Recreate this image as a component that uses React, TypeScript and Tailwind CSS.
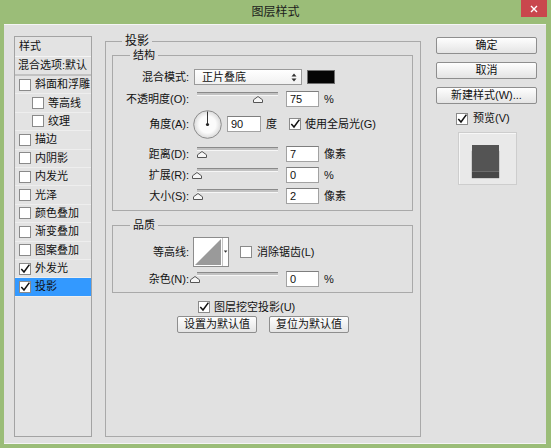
import React from 'react';

type Effect = { name: string; on?: boolean; indent?: boolean; active?: boolean };

const effects: Effect[] = [
  { name: '斜面和浮雕' },
  { name: '等高线', indent: true },
  { name: '纹理', indent: true },
  { name: '描边' },
  { name: '内阴影' },
  { name: '内发光' },
  { name: '光泽' },
  { name: '颜色叠加' },
  { name: '渐变叠加' },
  { name: '图案叠加' },
  { name: '外发光', on: true },
  { name: '投影', on: true, active: true },
];

function Check({ on }: { on?: boolean }) {
  return (
    <span className="flex h-[12px] w-[12px] shrink-0 items-center justify-center border border-[#8a8a8a] bg-white">
      {on && (
        <svg viewBox="0 0 10 10" className="h-[10px] w-[10px] overflow-visible">
          <path d="M1.3 5 L4 8 L9.4 0.6" fill="none" stroke="#111" strokeWidth="1.5" />
        </svg>
      )}
    </span>
  );
}

function Label({ children }: { children: React.ReactNode }) {
  return <span className="w-[76px] shrink-0 whitespace-nowrap text-right">{children}</span>;
}

function Field({ v, w = 'w-[33px]' }: { v: string; w?: string }) {
  return (
    <div className={`ml-[5px] flex h-[16px] shrink-0 items-center border border-[#a2a2a2] border-t-[#7e7e7e] bg-white pl-[3px] ${w}`}>
      {v}
    </div>
  );
}

function Slider({ thumb }: { thumb: number }) {
  return (
    <div className="relative ml-[4px] h-[16px] w-[88px] shrink-0">
      <div className="absolute left-[4px] right-[3px] top-[1px] h-[4px] border-t border-b border-[#8a8a8a] border-b-[#f6f6f6] bg-[#c2c2c2]" />
      <svg className="absolute top-[5px]" style={{ left: thumb - 5 }} width="10" height="7" viewBox="0 0 10 7">
        <path d="M5 0.5 L9.5 3.8 V6.5 H0.5 V3.8 Z" fill="#f6f6f6" stroke="#555" />
      </svg>
    </div>
  );
}

function Btn({ children, className = '' }: { children: React.ReactNode; className?: string }) {
  return (
    <div
      className={`flex h-[17px] shrink-0 items-center justify-center rounded-[2px] border border-[#8e8e8e] bg-linear-to-b from-[#fefefe] to-[#e4e4e4] ${className}`}
    >
      {children}
    </div>
  );
}

export default function App() {
  return (
    <div className="flex h-[448px] w-[551px] flex-col bg-[#9bbd78] font-['Liberation_Sans','Noto_Sans_CJK_SC',sans-serif] text-[11px] leading-none text-[#111]">
      {/* title bar */}
      <div className="relative flex h-[24px] shrink-0 items-center justify-center">
        <span className="text-[12px] text-[#1c1c1c]">图层样式</span>
        <div className="absolute right-[4px] top-0 flex h-[17px] w-[26px] items-center justify-center bg-[#c9474d]">
          <svg width="8" height="8" viewBox="0 0 8 8">
            <path d="M1 1 L7 7 M7 1 L1 7" stroke="#fff" strokeWidth="1.4" />
          </svg>
        </div>
      </div>

      {/* dialog body */}
      <div className="ml-[4px] flex h-[420px] w-[542px] shrink-0 items-start border-t border-b border-[#f5f5f5] bg-[#e1e1e1] pl-[10px] pt-[10px]">
        {/* styles list */}
        <div className="mt-[1px] flex h-[401px] w-[78px] shrink-0 flex-col border border-[#a3a3a3] bg-[#e3e3e3]">
          <div className="flex h-[20px] shrink-0 items-center border-b border-[#f4f4f4] pl-[4px]">样式</div>
          <div className="flex h-[19px] shrink-0 items-center whitespace-nowrap border-b-2 border-[#c2c2c2] pl-[3px]">
            混合选项:默认
          </div>
          {effects.map((e) => (
            <div
              key={e.name}
              className={`flex h-[18.4px] shrink-0 items-center gap-[4px] border-b border-[#eeeeee] ${
                e.indent ? 'pl-[17px]' : 'pl-[4px]'
              } ${e.active ? 'bg-[#3399ff]' : ''}`}
            >
              <Check on={e.on} />
              <span className="whitespace-nowrap">{e.name}</span>
            </div>
          ))}
        </div>

        {/* drop shadow settings */}
        <fieldset className="ml-[13px] h-[402px] w-[316px] shrink-0 border border-[#a9a9a9]">
          <legend className="ml-[16px] px-[3px] text-[12px] leading-[12px]">投影</legend>

          <fieldset className="ml-[6px] w-[301px] border border-[#a9a9a9] pb-[6px]">
            <legend className="ml-[17px] px-[3px] leading-[16px]">结构</legend>

            <div className="mt-[6px] flex h-[16px] items-center">
              <Label>混合模式:</Label>
              <div className="ml-[5px] flex h-[16px] w-[108px] items-center justify-between border border-[#9a9a9a] bg-linear-to-b from-white to-[#f1f1f1] pl-[7px] pr-[4px]">
                <span>正片叠底</span>
                <svg width="6" height="9" viewBox="0 0 6 9">
                  <path d="M3 0.5 L5.5 3.5 H0.5 Z M3 8.5 L5.5 5.5 H0.5 Z" fill="#333" />
                </svg>
              </div>
              <div className="ml-[5px] h-[14px] w-[28px] border border-[#6f6f6f] bg-[#050505]" />
            </div>

            <div className="mt-[6px] flex h-[16px] items-center">
              <Label>不透明度(O):</Label>
              <Slider thumb={65} />
              <Field v="75" />
              <span className="ml-[5px]">%</span>
            </div>

            <div className="mt-[2px] flex h-[30px] items-center">
              <Label>角度(A):</Label>
              <svg className="ml-[4px] shrink-0" width="29" height="29" viewBox="0 0 29 29">
                <defs>
                  <radialGradient id="dial" cx="0.5" cy="0.5" r="0.5">
                    <stop offset="0.6" stopColor="#fbfbfb" />
                    <stop offset="1" stopColor="#dadada" />
                  </radialGradient>
                </defs>
                <circle cx="14.5" cy="14.5" r="13.8" fill="url(#dial)" stroke="#8c8c8c" />
                <line x1="14.5" y1="14.5" x2="14.5" y2="1.5" stroke="#333" strokeWidth="1" />
                <circle cx="14.5" cy="14.5" r="1.6" fill="#222" />
              </svg>
              <Field v="90" w="w-[34px]" />
              <span className="ml-[5px]">度</span>
              <span className="ml-[12px]">
                <Check on />
              </span>
              <span className="ml-[4px] whitespace-nowrap">使用全局光(G)</span>
            </div>

            <div className="mt-[7px] flex h-[16px] items-center">
              <Label>距离(D):</Label>
              <Slider thumb={9} />
              <Field v="7" />
              <span className="ml-[5px]">像素</span>
            </div>

            <div className="mt-[5px] flex h-[16px] items-center">
              <Label>扩展(R):</Label>
              <Slider thumb={4} />
              <Field v="0" />
              <span className="ml-[5px]">%</span>
            </div>

            <div className="mt-[5px] flex h-[16px] items-center">
              <Label>大小(S):</Label>
              <Slider thumb={5} />
              <Field v="2" />
              <span className="ml-[5px]">像素</span>
            </div>
          </fieldset>

          <fieldset className="ml-[6px] mt-[6px] w-[301px] border border-[#a9a9a9] pb-[5px]">
            <legend className="ml-[17px] px-[3px] leading-[16px]">品质</legend>

            <div className="mt-[4px] flex h-[30px] items-center">
              <Label>等高线:</Label>
              <svg className="ml-[4px] shrink-0" width="36" height="30" viewBox="0 0 36 30">
                <rect x="0.5" y="0.5" width="35" height="29" fill="#fff" stroke="#8c8c8c" />
                <path d="M2 28 L28 2 V28 Z" fill="#9a9a9a" />
                <line x1="29.5" y1="1" x2="29.5" y2="29" stroke="#c4c4c4" />
                <path d="M30.8 13.5 H34.4 L32.6 15.8 Z" fill="#333" />
              </svg>
              <span className="ml-[11px]">
                <Check />
              </span>
              <span className="ml-[5px] whitespace-nowrap">消除锯齿(L)</span>
            </div>

            <div className="mt-[4px] flex h-[16px] items-center">
              <Label>杂色(N):</Label>
              <Slider thumb={2} />
              <Field v="0" />
              <span className="ml-[5px]">%</span>
            </div>
          </fieldset>

          <div className="mt-[7px] flex h-[14px] items-center pl-[92px]">
            <Check on />
            <span className="ml-[4px] whitespace-nowrap">图层挖空投影(U)</span>
          </div>

          <div className="mt-[2px] flex justify-center gap-[12px]">
            <Btn className="w-[80px]">设置为默认值</Btn>
            <Btn className="w-[80px]">复位为默认值</Btn>
          </div>
        </fieldset>

        {/* right column */}
        <div className="ml-[15px] mt-[2px] flex w-[101px] shrink-0 flex-col">
          <Btn>确定</Btn>
          <Btn className="mt-[8px]">取消</Btn>
          <Btn className="mt-[8px]">新建样式(W)...</Btn>
          <div className="mt-[8px] flex h-[13px] items-center pl-[20px]">
            <Check on />
            <span className="ml-[5px] whitespace-nowrap">预览(V)</span>
          </div>
          <div className="ml-[22px] mt-[7px] h-[53px] w-[59px] border border-[#cdcdcd] bg-[#e9e9e9] pl-[13px] pt-[12px] shadow-[inset_1px_1px_0_#f7f7f7]">
            <div className="h-[27px] w-[27px] border-b border-[#6c6c6c] bg-[#545454] shadow-[0_6px_1px_#474747]" />
          </div>
        </div>
      </div>
    </div>
  );
}
